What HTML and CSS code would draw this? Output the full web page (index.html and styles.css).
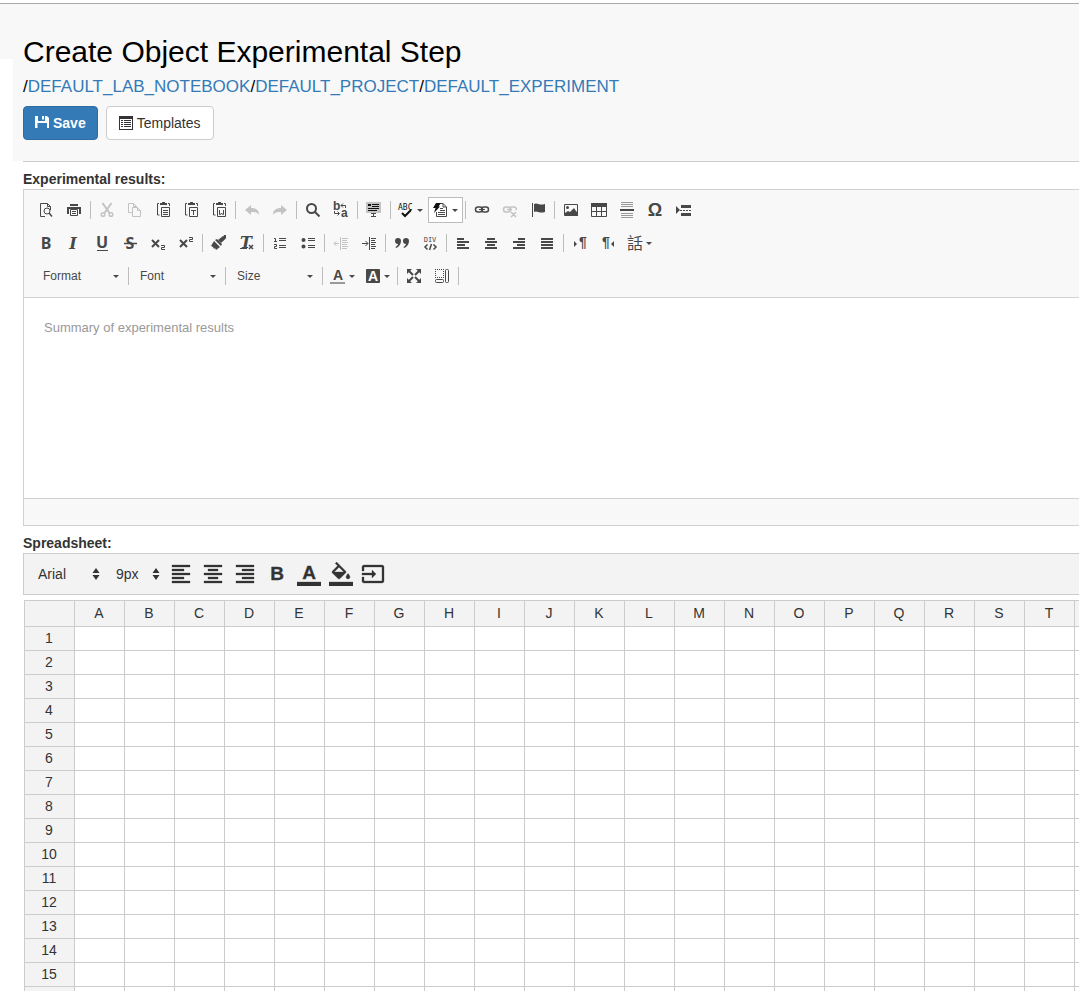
FILE: index.html
```
<!DOCTYPE html>
<html lang="en">
<head>
<meta charset="utf-8">
<title>Create Object Experimental Step</title>
<link rel="stylesheet" href="styles.css">
</head>
<body>
<header class="page-header">
  <h1 class="page-title">Create Object Experimental Step</h1>
  <nav class="breadcrumb">/<a href="#">DEFAULT_LAB_NOTEBOOK</a>/<a href="#">DEFAULT_PROJECT</a>/<a href="#">DEFAULT_EXPERIMENT</a></nav>
  <div class="actions">
    <button class="btn btn-primary" type="button"><svg class="btn-icon" width="14" height="14" viewBox="0 0 14 14"><path fill="currentColor" d="M0 0h3v5h7V0h2l2 2v10h-2V7H2.500v5H0zM7 0h2v3.500H7z"/></svg>Save</button>
    <button class="btn" type="button"><svg class="btn-icon" width="14" height="14" viewBox="0 0 14 14"><path fill="currentColor" fill-rule="evenodd" d="M0 0h14v14H0zM1 3v10h12V3zM2 4h2v1H2zm3 0h7v1H5zM2 6h2v1H2zm3 0h7v1H5zM2 8h2v1H2zm3 0h7v1H5zM2 10h2v1H2zm3 0h7v1H5z"/></svg>Templates</button>
  </div>
</header>
<main class="content">
  <section class="field">
    <label class="field-label" for="results">Experimental results:</label>
    <div class="editor">
      <div class="toolbar">
        <div class="tool-row">
          <button class="tool" aria-label="Preview"><svg viewBox="0 0 16 16"><path class="line" d="M7 14.500H2.500v-13h7l3 3V8M9.500 1.500v3h3"/><circle class="line" cx="9" cy="9" r="3"/><path class="thick" d="M11 11l3 3.500"/></svg></button>
          <button class="tool" aria-label="Print"><svg viewBox="0 0 16 16"><path class="fill" d="M4 2h8v2H4zM1 5h14v7h-2V7H3v5H1z"/><path class="line" d="M4.500 7.500h7v6h-7zM6 9.500h4M6 11.500h4"/></svg></button>
          <span class="sep"></span>
          <button class="tool" aria-label="Cut" disabled><svg viewBox="0 0 16 16"><path class="heavy" d="M3.500 1l7 10M12.500 1L5.500 11"/><circle class="thick" cx="4" cy="12.500" r="1.800"/><circle class="thick" cx="12" cy="12.500" r="1.800"/></svg></button>
          <button class="tool" aria-label="Copy" disabled><svg viewBox="0 0 16 16"><path class="line" d="M5 10.500H1.500v-9h5l3 3V5M6.500 1.500v3h3M5.500 5.500h5l3 3v6h-8zM10.500 5.500v3h3"/></svg></button>
          <button class="tool" aria-label="Paste"><svg viewBox="0 0 16 16"><path class="fill" d="M5 1h2V0h3v1h2v2H5z"/><path class="line" d="M4 1.500H2.500v11.500h2M13 1.500h1.500V4M6.500 5.500h8v9h-8zM8 8.500h5M8 10.500h5M8 12.500h5"/></svg></button>
          <button class="tool" aria-label="Paste as plain text"><svg viewBox="0 0 16 16"><path class="fill" d="M5 1h2V0h3v1h2v2H5z"/><path class="line" d="M4 1.500H2.500v11.500h2M13 1.500h1.500V4M6.500 5.500h8v9h-8zM8 8.500h5M10.500 8v5"/></svg></button>
          <button class="tool" aria-label="Paste from Word"><svg viewBox="0 0 16 16"><path class="fill" d="M5 1h2V0h3v1h2v2H5z"/><path class="line" d="M4 1.500H2.500v11.500h2M13 1.500h1.500V4M6.500 5.500h8v9h-8zM8.500 8v4.500h1L10.500 11l1 1.500h1V8"/></svg></button>
          <span class="sep"></span>
          <button class="tool" aria-label="Undo" disabled><svg viewBox="0 0 16 16"><path class="fill" d="M1 8l6-5v3c5 0 8 2 8 7-2-3-4-3-8-3v3z"/></svg></button>
          <button class="tool" aria-label="Redo" disabled><svg viewBox="0 0 16 16"><path class="fill" d="M15 8L9 3v3c-5 0-8 2-8 7 2-3 4-3 8-3v3z"/></svg></button>
          <span class="sep"></span>
          <button class="tool" aria-label="Find"><svg viewBox="0 0 16 16"><circle class="heavy" cx="6.500" cy="6.500" r="4.500"/><path class="heavy" d="M9.500 9.500l5 5"/></svg></button>
          <button class="tool" aria-label="Replace"><svg viewBox="0 0 16 16"><text class="g-swap" x="0" y="8">b</text><text class="g-swap" x="8" y="15">a</text><path class="line" d="M8 3.500h4.500V6M10 1.500l-2 2 2 2M1.500 9v2.500H6M4.500 9.500l2 2-2 2"/></svg></button>
          <span class="sep"></span>
          <button class="tool" aria-label="Select all"><svg viewBox="0 0 16 16"><path class="shade" d="M0 0h15v11H0z"/><path class="line ink" d="M2 2.500h3M2 3.500h3M6 2.500h7M6 4.500h7M2 6.500h11M2 8.500h9"/><path class="line" d="M5 11.500h5M7.500 11v4M5 14.500h5"/></svg></button>
          <span class="sep"></span>
          <button class="tool tool-menu" aria-label="Spell check"><svg viewBox="0 0 16 16"><text class="g-abc" x="0" y="8">ABC</text><path class="heavy ink" d="M4 11l3 3L13 8"/></svg><i class="caret"></i></button>
          <button class="tool tool-menu tool-on" aria-label="Auto correct"><svg viewBox="0 0 16 16"><path class="line" d="M6 1.500h4l3.500 3.500v9.500h-10V10M10 1.500V5h3M7 6.500h3M7 8.500h5M5 10.500h7M5 12.500h7"/><path class="fill ink" d="M3 1h5L5.500 4.500H7L1 11l1.500-5H0z"/></svg><i class="caret"></i></button>
          <span class="sep"></span>
          <button class="tool" aria-label="Link"><svg viewBox="0 0 16 16"><rect class="thick" x="1.500" y="5" width="7" height="5" rx="2.500"/><rect class="thick" x="7.500" y="5" width="7" height="5" rx="2.500"/><path class="line" d="M5 7.500h6"/></svg></button>
          <button class="tool" aria-label="Unlink" disabled><svg viewBox="0 0 16 16"><rect class="thick" x="1.500" y="5" width="7" height="5" rx="2.500"/><path class="thick" d="M8 5h4a2 2 0 0 1 2 3M5 7.500h5M9 10l5 5M14 10l-5 5"/></svg></button>
          <button class="tool" aria-label="Anchor"><svg viewBox="0 0 16 16"><path class="line" d="M2.500 1v14"/><path class="fill" d="M4 2c3-2 5 2 11 0v8c-6 2-8-2-11 0z"/></svg></button>
          <span class="sep"></span>
          <button class="tool" aria-label="Image"><svg viewBox="0 0 16 16"><path class="line" d="M1.500 2.500h13v11h-13z"/><circle class="fill" cx="4.500" cy="5.500" r="1.500"/><path class="fill" d="M2 11l3-2 2 1 4-4 2 3 2 2v3H2z"/></svg></button>
          <button class="tool" aria-label="Table"><svg viewBox="0 0 16 16"><path class="fill" d="M0 1h16v4H0z"/><path class="line" d="M.5 4.500h15v10H.5zM5.500 5v9M10.500 5v9M1 9.500h14"/></svg></button>
          <button class="tool" aria-label="Horizontal line"><svg viewBox="0 0 16 16"><path class="line pale" d="M2 .5h12M2 2.500h12M2 4.500h12M2 11.500h12M2 13.500h12M2 15.500h12"/><path class="fill" d="M1 7h14v2H1z"/></svg></button>
          <button class="tool" aria-label="Special character"><svg viewBox="0 0 16 16"><text class="g-omega" x="8" y="14">Ω</text></svg></button>
          <button class="tool" aria-label="Page break"><svg viewBox="0 0 16 16"><path class="fill" d="M1 4l4 4-4 4zM6 3h10v3H6zM6 11h10v3H6z"/><path class="line" stroke-dasharray="2 1" d="M5 8.500h11"/></svg></button>
        </div>
        <div class="tool-row">
          <button class="tool" aria-label="Bold"><svg viewBox="0 0 16 16"><text class="g-style" x="8" y="14">B</text></svg></button>
          <button class="tool" aria-label="Italic"><svg viewBox="0 0 16 16"><text class="g-style g-italic" x="7" y="14">I</text></svg></button>
          <button class="tool" aria-label="Underline"><svg viewBox="0 0 16 16"><text class="g-style" x="8" y="13">U</text><path class="line" d="M3 15.500h11"/></svg></button>
          <button class="tool" aria-label="Strikethrough"><svg viewBox="0 0 16 16"><text class="g-style" x="8" y="14">S</text><path class="thick" d="M2 8.500h13"/></svg></button>
          <button class="tool" aria-label="Subscript"><svg viewBox="0 0 16 16"><path class="heavy" d="M2 5l7 7M9 5l-7 7"/><path class="line" d="M11 10.500h3.500v2h-3v2H15"/></svg></button>
          <button class="tool" aria-label="Superscript"><svg viewBox="0 0 16 16"><path class="heavy" d="M2 5l7 7M9 5l-7 7"/><path class="line" d="M11 2.500h3.500v2h-3v2H15"/></svg></button>
          <span class="sep"></span>
          <button class="tool" aria-label="Copy formatting"><svg viewBox="0 0 16 16"><path class="fill" d="M13 0h2v3l-4 4zM6 4l5 5-1 2-6-6zM3 6l6 6-4 3-1-2-1 1-1-2-2-1z"/><path class="fill" d="M12 1l3 2-5 5-3-3z"/></svg></button>
          <button class="tool" aria-label="Remove format"><svg viewBox="0 0 16 16"><text class="g-style g-italic" x="7" y="13">T</text><path class="line" d="M1 13.500h7"/><path class="thick" d="M10 10l4 4M14 10l-4 4"/></svg></button>
          <span class="sep"></span>
          <button class="tool" aria-label="Numbered list"><svg viewBox="0 0 16 16"><path class="line" d="M2 3.500h1.500V7M2 6.500h3M2 9.500h2.500v2h-2v2H5M7 3.500h7M7 5.500h7M7 10.500h7M7 12.500h7"/></svg></button>
          <button class="tool" aria-label="Bulleted list"><svg viewBox="0 0 16 16"><circle class="fill" cx="3.500" cy="5" r="2"/><circle class="fill" cx="3.500" cy="11.500" r="2"/><path class="line" d="M8 3.500h7M8 5.500h7M8 10.500h7M8 12.500h7"/></svg></button>
          <span class="sep"></span>
          <button class="tool" aria-label="Decrease indent" disabled><svg viewBox="0 0 16 16"><path class="line" d="M7.500 2v13M1 8.500h5M3.500 6L1 8.500 3.500 11M9 3.500h6M9 5.500h5M9 7.500h6M9 9.500h5M9 11.500h6M9 13.500h5"/></svg></button>
          <button class="tool" aria-label="Increase indent"><svg viewBox="0 0 16 16"><path class="line" d="M8.500 2v13M1 8.500h6M4.500 6L7 8.500 4.500 11M10 3.500h5M10 5.500h4M10 7.500h5M10 9.500h4M10 11.500h5M10 13.500h4"/></svg></button>
          <span class="sep"></span>
          <button class="tool" aria-label="Block quote"><svg viewBox="0 0 16 16"><path class="fill" d="M1 6a3 3 0 0 1 6 0c0 3-2 6-5 7l-.5-1C3 11 4 10 4 9 2 9 1 8 1 6zM9 6a3 3 0 0 1 6 0c0 3-2 6-5 7l-.5-1c1.500-1 2.500-2 2.500-3-2 0-3-1-3-3z"/></svg></button>
          <button class="tool" aria-label="Create div"><svg viewBox="0 0 16 16"><text class="g-div" x="8" y="7">DIV</text><path class="thick" d="M5.500 9.500L3 12l2.500 2.500M11.500 9.500L14 12l-2.500 2.500M9.500 9l-2 6"/></svg></button>
          <span class="sep"></span>
          <button class="tool" aria-label="Align left"><svg viewBox="0 0 16 16"><path class="fill" d="M2 3h7v2H2zM2 6h12v2H2zM2 9h8v2H2zM2 12h12v2H2z"/></svg></button>
          <button class="tool" aria-label="Center"><svg viewBox="0 0 16 16"><path class="fill" d="M4 3h8v2H4zM2 6h12v2H2zM4 9h8v2H4zM2 12h12v2H2z"/></svg></button>
          <button class="tool" aria-label="Align right"><svg viewBox="0 0 16 16"><path class="fill" d="M7 3h7v2H7zM2 6h12v2H2zM6 9h8v2H6zM2 12h12v2H2z"/></svg></button>
          <button class="tool" aria-label="Justify"><svg viewBox="0 0 16 16"><path class="fill" d="M2 3h12v2H2zM2 6h12v2H2zM2 9h12v2H2zM2 12h12v2H2z"/></svg></button>
          <span class="sep"></span>
          <button class="tool" aria-label="Left to right"><svg viewBox="0 0 16 16"><path class="fill" d="M2 6l3 3-3 3z"/><text class="g-para" x="11" y="12">¶</text></svg></button>
          <button class="tool" aria-label="Right to left"><svg viewBox="0 0 16 16"><path class="fill" d="M14 6l-3 3 3 3z"/><text class="g-para" x="6" y="12">¶</text></svg></button>
          <button class="tool tool-menu" aria-label="Language"><svg viewBox="0 0 16 16"><text class="g-lang" x="8" y="14">話</text></svg><i class="caret"></i></button>
        </div>
        <div class="tool-row tool-row-combos">
          <button class="combo">Format<i class="caret"></i></button>
          <span class="sep"></span>
          <button class="combo">Font<i class="caret"></i></button>
          <span class="sep"></span>
          <button class="combo">Size<i class="caret"></i></button>
          <span class="sep"></span>
          <button class="tool tool-menu" aria-label="Text color"><svg viewBox="0 0 16 16"><text class="g-color" x="8" y="12">A</text><path class="fill pale" d="M0 14h15v2H0z"/></svg><i class="caret"></i></button>
          <button class="tool tool-menu" aria-label="Background color"><svg viewBox="0 0 16 16"><rect class="fill" x="1" y="1" width="14" height="14" rx="1"/><text class="g-color g-invert" x="8" y="13">A</text></svg><i class="caret"></i></button>
          <span class="sep"></span>
          <button class="tool" aria-label="Maximize"><svg viewBox="0 0 16 16"><path class="fill" d="M1 1h5L1 6zM15 1v5l-5-5zM1 15v-5l5 5zM15 15h-5l5-5z"/><path class="heavy" d="M3 3l4 4M13 3L9 7M3 13l4-4M13 13L9 9"/></svg></button>
          <button class="tool" aria-label="Show blocks"><svg viewBox="0 0 16 16"><path class="line" stroke-dasharray="1 1" d="M1 1.500h9M1.500 1v9M9.500 1v9M1 9.500h9"/><rect class="line" x="1.500" y="11.500" width="8" height="3" rx="1"/><rect class="line" x="11.500" y="1.500" width="3" height="13" rx="1"/></svg></button>
          <span class="sep"></span>
        </div>
      </div>
      <textarea class="editor-body" id="results" placeholder="Summary of experimental results"></textarea>
      <div class="editor-status"></div>
    </div>
  </section>
  <section class="field">
    <h2 class="field-label">Spreadsheet:</h2>
    <div class="sheet-toolbar">
      <div class="picker picker-font">
        <select aria-label="Font family"><option>Arial</option></select>
        <svg class="picker-arrows" width="8" height="12" viewBox="0 0 8 12"><path fill="currentColor" d="M4 0l3.500 5h-7zM4 12L.5 7h7z"/></svg>
      </div>
      <div class="picker picker-size">
        <select aria-label="Font size"><option>9px</option></select>
        <svg class="picker-arrows" width="8" height="12" viewBox="0 0 8 12"><path fill="currentColor" d="M4 0l3.500 5h-7zM4 12L.5 7h7z"/></svg>
      </div>
      <button class="sheet-tool" aria-label="Align left"><svg viewBox="0 0 24 24"><path d="M15 15H3v2h12v-2zm0-8H3v2h12V7zM3 13h18v-2H3v2zm0 8h18v-2H3v2zM3 3v2h18V3H3z"/></svg></button>
      <button class="sheet-tool" aria-label="Center"><svg viewBox="0 0 24 24"><path d="M7 15v2h10v-2H7zm-4 6h18v-2H3v2zm0-8h18v-2H3v2zm4-6v2h10V7H7zM3 3v2h18V3H3z"/></svg></button>
      <button class="sheet-tool" aria-label="Align right"><svg viewBox="0 0 24 24"><path d="M3 21h18v-2H3v2zm6-4h12v-2H9v2zm-6-4h18v-2H3v2zm6-4h12V7H9v2zM3 3v2h18V3H3z"/></svg></button>
      <button class="sheet-tool" aria-label="Bold"><svg viewBox="0 0 24 24"><text class="g-sheet-bold" x="12" y="18">B</text></svg></button>
      <button class="sheet-tool" aria-label="Text color"><svg viewBox="0 0 24 24"><text class="g-sheet-color" x="12" y="17">A</text><path d="M0 20h24v4H0z"/></svg></button>
      <button class="sheet-tool" aria-label="Fill color"><svg viewBox="0 0 24 24"><path d="M16.560 8.940L7.620 0 6.210 1.410l2.380 2.380-5.150 5.150c-.59.59-.59 1.540 0 2.120l5.500 5.500c.29.29.68.44 1.060.44s.77-.15 1.060-.44l5.500-5.500c.59-.58.59-1.530 0-2.120zM5.210 10L10 5.210 14.790 10H5.210zM19 11.500s-2 2.170-2 3.500c0 1.100.9 2 2 2s2-.9 2-2c0-1.330-2-3.500-2-3.500zM0 20h24v4H0z"/></svg></button>
      <button class="sheet-tool" aria-label="Insert"><svg viewBox="0 0 24 24"><path d="M21 3H3c-1.100 0-2 .9-2 2v4h2V5h18v14H3v-4H1v4c0 1.100.9 2 2 2h18c1.100 0 2-.9 2-2V5c0-1.100-.9-2-2-2zM11 16l4-4-4-4v3H1v2h10v3z"/></svg></button>
    </div>
    <table class="sheet" id="sheet"></table>
  </section>
</main>
<script src="sheet.js"></script>
</body>
</html>
```
FILE: sheet.js
```
// One unlabelled row and column trail the grid at its edges.
const columns = [..."ABCDEFGHIJKLMNOPQRST", ""];
const rowLabels = [...Array.from({ length: 15 }, (_, i) => i + 1), ""];
const headCells = columns.map(c => `<th scope="col">${c}</th>`).join("");
const emptyCells = "<td></td>".repeat(columns.length);
const rows = rowLabels
  .map(label => `<tr><th scope="row">${label}</th>${emptyCells}</tr>`)
  .join("");
document.getElementById("sheet").innerHTML =
  `<thead><tr><td class="corner"></td>${headCells}</tr></thead><tbody>${rows}</tbody>`;
```
FILE: styles.css
```
* { box-sizing: border-box; }
body {
  margin: 0;
  height: 100vh;
  overflow: hidden;
  padding-top: 3px;
  background: #fff;
  color: #333;
  font: 14px/20px "Liberation Sans", Arial, sans-serif;
}
button, select, textarea { font: inherit; color: inherit; margin: 0; }
button { cursor: pointer; }

/* Page header */
.page-header {
  border-top: 1px solid #aaa;
  padding: 31px 23px 21px;
  background: linear-gradient(#fff, #fff) 0 55px / 13px 100% no-repeat #f8f8f8;
}
.page-title { margin: 0; color: #000; font-size: 30px; font-weight: 400; line-height: 33px; }
.breadcrumb { margin-top: 9px; color: #000; font-size: 17px; line-height: 20px; }
.breadcrumb a { color: #337ab7; text-decoration: none; }
.actions { display: flex; gap: 8px; margin-top: 9px; }
.btn {
  display: flex;
  align-items: center;
  gap: 4px;
  height: 34px;
  padding: 0 12px;
  border: 1px solid #ccc;
  border-radius: 4px;
  background: #fff;
}
.btn-primary { padding: 0 11px; border-color: #2e6da4; background: #337ab7; color: #fff; font-weight: 700; }

.content { margin-left: 23px; border-top: 1px solid #ccc; }
.field { padding-top: 7px; }
.field-label { display: block; margin: 0; font-size: 14px; font-weight: 700; line-height: 20px; }

/* Rich text editor */
.editor { border: 1px solid #d1d1d1; border-right: 0; }
.toolbar { display: flex; flex-direction: column; gap: 5px; height: 108px; padding: 6px 8px 0; background: #f8f8f8; border-bottom: 1px solid #d1d1d1; }
.tool-row { display: flex; align-items: center; height: 28px; }
.tool-row-combos { padding-left: 2px; }
.tool {
  display: flex;
  flex: none;
  align-items: center;
  justify-content: center;
  width: 28px;
  height: 26px;
  padding: 0;
  border: 0;
  background: none;
  color: #484848;
}
.tool:disabled { color: #c3c3c3; }
.tool svg { width: 16px; height: 16px; overflow: visible; }
.tool-menu { width: 35px; gap: 3px; }
.tool-on { border: 1px solid #bcbcbc; background: #fff; }
.sep { flex: none; width: 1px; height: 18px; margin: 0 2px; background: #bcbcbc; }
.caret { width: 0; height: 0; border: 3px solid transparent; border-top-color: #484848; border-bottom: 0; }
.combo {
  display: flex;
  align-items: center;
  justify-content: space-between;
  width: 92px;
  height: 26px;
  padding: 0 7px 0 9px;
  border: 0;
  background: none;
  color: #484848;
  font-size: 12px;
}
.fill { fill: currentColor; }
.line, .thick, .heavy { fill: none; stroke: currentColor; stroke-width: 1; }
.thick { stroke-width: 1.500; }
.heavy { stroke-width: 2; }
.ink { color: #111; }
.pale { color: #999; }
.shade { fill: #c4c4c4; }
.tool text { fill: currentColor; font-family: "Liberation Sans", Arial, sans-serif; font-weight: 700; }
.tool .g-style { font-family: "Noto Sans", sans-serif; font-size: 16px; text-anchor: middle; }
.tool .g-italic { font-family: "DejaVu Serif", serif; font-style: italic; }
.tool .g-swap { font-size: 12px; }
.tool .g-abc { font-family: "DejaVu Sans Mono", monospace; font-size: 8px; font-weight: 400; fill: #111; }
.tool .g-div { font-family: "DejaVu Sans Mono", monospace; font-size: 7px; font-weight: 400; text-anchor: middle; }
.tool .g-omega { font-size: 18px; text-anchor: middle; }
.tool .g-para { font-size: 14px; text-anchor: middle; }
.tool .g-lang { font-family: "Noto Sans CJK TC", sans-serif; font-size: 16px; font-weight: 400; text-anchor: middle; }
.tool .g-color { font-size: 14px; text-anchor: middle; }
.tool .g-invert { fill: #fff; }
.editor-body {
  display: block;
  width: 100%;
  height: 200px;
  padding: 20px;
  border: 0;
  outline: 0;
  resize: none;
  background: #fff;
  font-size: 13px;
}
.editor-body::placeholder { color: #999; opacity: 1; }
.editor-status { height: 27px; border-top: 1px solid #d1d1d1; background: #f8f8f8; }

/* Spreadsheet */
.sheet-toolbar {
  display: flex;
  align-items: center;
  height: 42px;
  padding-left: 8px;
  border: 1px solid #ccc;
  border-right: 0;
  background: #f3f3f3;
}
.picker { display: grid; align-items: center; padding: 0 5px 0 6px; }
.picker > * { grid-area: 1 / 1; }
.picker select { width: 100%; padding: 0; border: 0; outline: 0; background: none; appearance: none; }
.picker-arrows { justify-self: end; pointer-events: none; }
.picker-font { width: 73px; margin-right: 5px; }
.picker-size { width: 55px; }
.sheet-tool { display: flex; align-items: center; justify-content: center; width: 32px; height: 32px; padding: 0; border: 0; background: none; }
.sheet-tool svg { width: 24px; height: 24px; fill: currentColor; stroke: currentColor; stroke-width: 0.300; }
.sheet-tool text { font-family: "Liberation Sans", Arial, sans-serif; font-weight: 700; text-anchor: middle; }
.g-sheet-bold, .g-sheet-color { font-size: 19px; }
.sheet { width: 1101px; margin: 5px 0 0 1px; table-layout: fixed; border-collapse: collapse; }
.sheet th, .sheet td { width: 50px; height: 24px; padding: 0 1px 2px 0; border: 1px solid #ccc; font-weight: 400; text-align: center; }
.sheet thead th, .sheet thead td { height: 26px; }
.sheet th, .sheet .corner { background: #f3f3f3; }
```
